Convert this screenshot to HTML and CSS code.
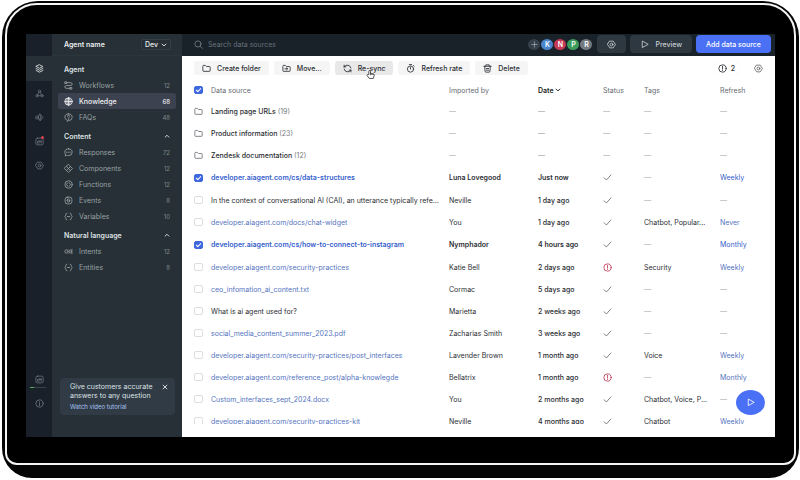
FILE: index.html
```html
<!doctype html>
<html lang="en">
<head>
    <meta charset="utf-8">
    <title>Knowledge</title>
    <link rel="stylesheet" href="styles.css">
</head>
<body>
<svg class="sprite" aria-hidden="true">
    <symbol id="layers" viewBox="0 0 16 16"><path d="M8 1.500l6 3-6 3-6-3zM2 8l6 3 6-3M2 11.500l6 3 6-3"/></symbol>
    <symbol id="nodes" viewBox="0 0 16 16"><circle cx="8" cy="4" r="2"/><circle cx="3.500" cy="12" r="2"/><circle cx="12.500" cy="12" r="2"/><path d="M7 6l-2.500 4M9 6l2.500 4M5.500 12h5"/></symbol>
    <symbol id="launch" viewBox="0 0 16 16"><path d="M9 2l5 6-5 6-3-6zM6 5v6M3.500 5v6M1.500 6.500v3M10 5v6"/></symbol>
    <symbol id="chart" viewBox="0 0 16 16"><rect x="1.500" y="2" width="13" height="12" rx="3"/><path d="M4.500 11V8M7 11V6l2 3 2-3v5"/></symbol>
    <symbol id="gear" viewBox="0 0 16 16"><path d="M5 2h6l4 6-4 6H5L1 8z"/><circle cx="8" cy="8" r="2.500"/></symbol>
    <symbol id="info" viewBox="0 0 16 16"><circle cx="8" cy="8" r="6.500"/><path d="M8 7.500V12M8 4.500v1"/></symbol>
    <symbol id="alert" viewBox="0 0 16 16"><circle cx="8" cy="8" r="6.500"/><path d="M8 4v4.500M8 10.500v1"/></symbol>
    <symbol id="flow" viewBox="0 0 16 16"><path d="M5 3h7a2 2 0 010 5H4a2 2 0 000 5h7"/><path d="M2 1.500h3v3H2zM11 11.500h3v3h-3z"/></symbol>
    <symbol id="globe" viewBox="0 0 16 16"><circle cx="8" cy="8" r="6.500"/><ellipse cx="8" cy="8" rx="3" ry="6.500"/><path d="M1.500 8h13M8 1.500v13"/></symbol>
    <symbol id="question" viewBox="0 0 16 16"><path d="M8 1.500a6.500 6 0 016.500 6 6.500 6 0 01-6.500 6l-2 1.500v-2A6.500 6 0 011.500 7.500 6.500 6 0 018 1.500z"/><path d="M6 6a2 2 0 114 0c0 1.500-2 1.500-2 3M8 10.500v1"/></symbol>
    <symbol id="bubble" viewBox="0 0 16 16"><path d="M8 1.500a6.500 6 0 016.500 6 6.500 6 0 01-6.500 6c-1 0-2 0-3-.7L2 14l.7-3A6 6 0 011.500 7.500 6.500 6 0 018 1.500z"/><path d="M4.500 7.500h1M7.500 7.500h1M10.500 7.500h1"/></symbol>
    <symbol id="component" viewBox="0 0 16 16"><path d="M8 1l7 7-7 7-7-7zM4.500 4.500l7 7M11.500 4.500l-7 7"/></symbol>
    <symbol id="function" viewBox="0 0 16 16"><circle cx="8" cy="8" r="6.500"/><path d="M6.500 5L4.500 8l2 3M9.500 5l2 3-2 3"/></symbol>
    <symbol id="event" viewBox="0 0 16 16"><rect x="2" y="2" width="12" height="12" rx="4"/><path d="M7 5L5 8h2v3M9 5v3h2l-2 3"/></symbol>
    <symbol id="braces" viewBox="0 0 16 16"><path d="M5 2C2 2 4 7 1.500 8 4 9 2 14 5 14M11 2c3 0 1 5 3.500 6-2.500 1-.500 6-3.500 6M6 8h4"/></symbol>
    <symbol id="intent" viewBox="0 0 16 16"><circle cx="4.500" cy="8" r="3"/><path d="M9 5c2 2 2 4 0 6M11.500 5c2 2 2 4 0 6M14 4v8"/></symbol>
    <symbol id="folder" viewBox="0 0 16 16"><path d="M1.500 3.500a1 1 0 011-1h3.500l2 2h5.500a1 1 0 011 1V12a1 1 0 01-1 1h-11a1 1 0 01-1-1z"/></symbol>
    <symbol id="move" viewBox="0 0 16 16"><path d="M1.500 3.500a1 1 0 011-1h3.500l2 2h5.500a1 1 0 011 1V12a1 1 0 01-1 1h-11a1 1 0 01-1-1zM5 8.500h5M8 6.500l2 2-2 2"/></symbol>
    <symbol id="sync" viewBox="0 0 16 16"><path d="M2 5V2M2 5h3M2 5a6.500 6 0 0112 2M14 11v3M14 11h-3M14 11A6.500 6 0 012 9"/></symbol>
    <symbol id="timer" viewBox="0 0 16 16"><circle cx="8" cy="9" r="5.500"/><path d="M8 5.500V9M6 1h4M13 2.500l1.500 1.500"/></symbol>
    <symbol id="trash" viewBox="0 0 16 16"><path d="M1.500 4h13M5 4V1.500h6V4M3 4l.7 9a1.500 1.500 0 001.500 1.500h5.600a1.500 1.500 0 001.500-1.500L13 4M6 8h4M6 11h4"/></symbol>
    <symbol id="search" viewBox="0 0 16 16"><circle cx="7" cy="7" r="5.500"/><path d="M11 11l4 4"/></symbol>
    <symbol id="play" viewBox="0 0 16 16"><path d="M4 2.500v11L14 8z"/></symbol>
    <symbol id="up" viewBox="0 0 16 16"><path d="M3 11l5-5 5 5"/></symbol>
    <symbol id="down" viewBox="0 0 16 16"><path d="M3 5.500l5 5 5-5"/></symbol>
    <symbol id="plus" viewBox="0 0 16 16"><path d="M8 2v12M2 8h12"/></symbol>
    <symbol id="close" viewBox="0 0 16 16"><path d="M3 3l10 10M13 3L3 13"/></symbol>
    <symbol id="check" viewBox="0 0 16 16"><path d="M2 8.500l4 4 8-9"/></symbol>
</svg>
<div class="device">
    <div class="bezel">
        <div class="app">
            <nav class="rail" aria-label="Main">
                <button class="rail-btn active" aria-label="Content"><svg class="icon"><use href="#layers"/></svg></button>
                <button class="rail-btn" aria-label="Flows"><svg class="icon"><use href="#nodes"/></svg></button>
                <button class="rail-btn" aria-label="Launch"><svg class="icon"><use href="#launch"/></svg></button>
                <button class="rail-btn notify" aria-label="Analytics"><svg class="icon"><use href="#chart"/></svg></button>
                <button class="rail-btn" aria-label="Settings"><svg class="icon"><use href="#gear"/></svg></button>
                <button class="rail-btn usage" aria-label="Usage"><svg class="icon"><use href="#chart"/></svg></button>
                <button class="rail-btn" aria-label="Help"><svg class="icon"><use href="#info"/></svg></button>
            </nav>

            <aside class="sidebar">
                <header class="agent">
                    <strong>Agent name</strong>
                    <button class="env">Dev <svg class="icon tiny"><use href="#down"/></svg></button>
                </header>
                <div class="menu">
                    <section>
                        <h2>Agent</h2>
                        <a href="#"><svg class="icon"><use href="#flow"/></svg>Workflows<span>12</span></a>
                        <a href="#" class="current"><svg class="icon"><use href="#globe"/></svg>Knowledge<span>68</span></a>
                        <a href="#"><svg class="icon"><use href="#question"/></svg>FAQs<span>48</span></a>
                    </section>
                    <section>
                        <h2>Content <svg class="icon tiny"><use href="#up"/></svg></h2>
                        <a href="#"><svg class="icon"><use href="#bubble"/></svg>Responses<span>72</span></a>
                        <a href="#"><svg class="icon"><use href="#component"/></svg>Components<span>12</span></a>
                        <a href="#"><svg class="icon"><use href="#function"/></svg>Functions<span>12</span></a>
                        <a href="#"><svg class="icon"><use href="#event"/></svg>Events<span>8</span></a>
                        <a href="#"><svg class="icon"><use href="#braces"/></svg>Variables<span>10</span></a>
                    </section>
                    <section>
                        <h2>Natural language <svg class="icon tiny"><use href="#up"/></svg></h2>
                        <a href="#"><svg class="icon"><use href="#intent"/></svg>Intents<span>12</span></a>
                        <a href="#"><svg class="icon"><use href="#braces"/></svg>Entities<span>8</span></a>
                    </section>
                </div>
                <div class="promo">
                    <div>
                        <p>Give customers accurate<br>answers to any question</p>
                        <a href="#">Watch video tutorial</a>
                    </div>
                    <button aria-label="Dismiss"><svg class="icon tiny"><use href="#close"/></svg></button>
                </div>
            </aside>

            <main>
                <header class="topbar">
                    <label class="search">
                        <svg class="icon"><use href="#search"/></svg>
                        <input type="search" placeholder="Search data sources" aria-label="Search data sources">
                    </label>
                    <div class="people">
                        <button class="avatar add" aria-label="Invite"><svg class="icon"><use href="#plus"/></svg></button>
                        <span class="avatar blue">K</span>
                        <span class="avatar red">N</span>
                        <span class="avatar green">P</span>
                        <span class="avatar gray">R</span>
                    </div>
                    <button class="dark-btn square" aria-label="Settings"><svg class="icon"><use href="#gear"/></svg></button>
                    <button class="dark-btn preview"><svg class="icon"><use href="#play"/></svg>Preview</button>
                    <button class="primary-btn">Add data source</button>
                </header>

                <div class="toolbar">
                    <button class="tool"><svg class="icon"><use href="#folder"/></svg>Create folder</button>
                    <button class="tool"><svg class="icon"><use href="#move"/></svg>Move...</button>
                    <button class="tool hover"><svg class="icon"><use href="#sync"/></svg>Re-sync
                        <svg class="pointer" viewBox="0 0 16 16"><path d="M5 8V2.500a1.500 1.500 0 013 0V6l5 1c1.500.5 2 1.500 1.500 3L13 15H6L2 10c-1-1.500 1-2.500 3-2z"/><path d="M8 6v3M10.500 6.500V9M13 7v2"/></svg>
                    </button>
                    <button class="tool"><svg class="icon"><use href="#timer"/></svg>Refresh rate</button>
                    <button class="tool"><svg class="icon"><use href="#trash"/></svg>Delete</button>
                    <button class="issues"><svg class="icon"><use href="#alert"/></svg>2</button>
                    <button class="plain" aria-label="Table settings"><svg class="icon"><use href="#gear"/></svg></button>
                </div>

                <div class="sources">
                    <table>
                        <colgroup>
                            <col class="col-check"><col><col class="col-by"><col class="col-date"><col class="col-status"><col class="col-tags"><col class="col-refresh">
                        </colgroup>
                        <thead>
                            <tr>
                                <th><input type="checkbox" aria-label="Select all" checked></th>
                                <th>Data source</th>
                                <th>Imported by</th>
                                <th class="sorted">Date <svg class="icon tiny"><use href="#down"/></svg></th>
                                <th>Status</th>
                                <th>Tags</th>
                                <th>Refresh</th>
                            </tr>
                        </thead>
                        <tbody>
                            <tr class="folder"><td><svg class="icon"><use href="#folder"/></svg></td><td>Landing page URLs <span>(19)</span></td><td>—</td><td>—</td><td>—</td><td>—</td><td>—</td></tr>
                            <tr class="folder"><td><svg class="icon"><use href="#folder"/></svg></td><td>Product information <span>(23)</span></td><td>—</td><td>—</td><td>—</td><td>—</td><td>—</td></tr>
                            <tr class="folder"><td><svg class="icon"><use href="#folder"/></svg></td><td>Zendesk documentation <span>(12)</span></td><td>—</td><td>—</td><td>—</td><td>—</td><td>—</td></tr>
                            <tr class="selected"><td><input type="checkbox" aria-label="Select row" checked></td><td><a href="#">developer.aiagent.com/cs/data-structures</a></td><td>Luna Lovegood</td><td>Just now</td><td><svg class="icon ok"><use href="#check"/></svg></td><td class="none">—</td><td><a href="#">Weekly</a></td></tr>
                            <tr><td><input type="checkbox" aria-label="Select row"></td><td>In the context of conversational AI (CAI), an utterance typically refers to</td><td>Neville</td><td>1 day ago</td><td><svg class="icon ok"><use href="#check"/></svg></td><td class="none">—</td><td class="none">—</td></tr>
                            <tr><td><input type="checkbox" aria-label="Select row"></td><td><a href="#">developer.aiagent.com/docs/chat-widget</a></td><td>You</td><td>1 day ago</td><td><svg class="icon ok"><use href="#check"/></svg></td><td>Chatbot, Popular...</td><td><a href="#">Never</a></td></tr>
                            <tr class="selected"><td><input type="checkbox" aria-label="Select row" checked></td><td><a href="#">developer.aiagent.com/cs/how-to-connect-to-instagram</a></td><td>Nymphador</td><td>4 hours ago</td><td><svg class="icon ok"><use href="#check"/></svg></td><td class="none">—</td><td><a href="#">Monthly</a></td></tr>
                            <tr><td><input type="checkbox" aria-label="Select row"></td><td><a href="#">developer.aiagent.com/security-practices</a></td><td>Katie Bell</td><td>2 days ago</td><td><svg class="icon error"><use href="#alert"/></svg></td><td>Security</td><td><a href="#">Weekly</a></td></tr>
                            <tr><td><input type="checkbox" aria-label="Select row"></td><td><a href="#">ceo_infomation_ai_content.txt</a></td><td>Cormac</td><td>5 days ago</td><td><svg class="icon ok"><use href="#check"/></svg></td><td class="none">—</td><td class="none">—</td></tr>
                            <tr><td><input type="checkbox" aria-label="Select row"></td><td>What is ai agent used for?</td><td>Marietta</td><td>2 weeks ago</td><td><svg class="icon ok"><use href="#check"/></svg></td><td class="none">—</td><td class="none">—</td></tr>
                            <tr><td><input type="checkbox" aria-label="Select row"></td><td><a href="#">social_media_content_summer_2023.pdf</a></td><td>Zacharias Smith</td><td>3 weeks ago</td><td><svg class="icon ok"><use href="#check"/></svg></td><td class="none">—</td><td class="none">—</td></tr>
                            <tr><td><input type="checkbox" aria-label="Select row"></td><td><a href="#">developer.aiagent.com/security-practices/post_interfaces</a></td><td>Lavender Brown</td><td>1 month ago</td><td><svg class="icon ok"><use href="#check"/></svg></td><td>Voice</td><td><a href="#">Weekly</a></td></tr>
                            <tr><td><input type="checkbox" aria-label="Select row"></td><td><a href="#">developer.aiagent.com/reference_post/alpha-knowlegde</a></td><td>Bellatrix</td><td>1 month ago</td><td><svg class="icon error"><use href="#alert"/></svg></td><td class="none">—</td><td><a href="#">Monthly</a></td></tr>
                            <tr><td><input type="checkbox" aria-label="Select row"></td><td><a href="#">Custom_interfaces_sept_2024.docx</a></td><td>You</td><td>2 months ago</td><td><svg class="icon ok"><use href="#check"/></svg></td><td>Chatbot, Voice, P...</td><td class="none">—</td></tr>
                            <tr><td><input type="checkbox" aria-label="Select row"></td><td><a href="#">developer.aiagent.com/security-practices-kit</a></td><td>Neville</td><td>4 months ago</td><td><svg class="icon ok"><use href="#check"/></svg></td><td>Chatbot</td><td><a href="#">Weekly</a></td></tr>
                        </tbody>
                    </table>
                </div>
                <button class="run" aria-label="Run agent"><svg class="icon"><use href="#play"/></svg></button>
            </main>
        </div>
    </div>
</div>
</body>
</html>
```
FILE: styles.css
```css
* {
    box-sizing: border-box;
}
body {
    margin: 0;
    height: 100vh;
    padding: 1px 1px 2px 2px;
    background: #fff;
    font-family: Inter, "Liberation Sans", sans-serif;
    font-size: 7px;
    line-height: 9px;
    color: #2b2e33;
}
button, input {
    font: inherit;
    color: inherit;
    margin: 0;
}
button {
    border: 0;
    padding: 0;
    background: none;
    display: flex;
    align-items: center;
    justify-content: center;
    white-space: nowrap;
}
a {
    color: #5575c0;
    text-decoration: none;
}
.sprite {
    display: none;
}
.icon {
    width: 9px;
    height: 9px;
    flex: none;
    fill: none;
    stroke: currentColor;
    stroke-width: 1.5;
    stroke-linecap: round;
    stroke-linejoin: round;
}
.icon.tiny {
    width: 6px;
    height: 6px;
    stroke-width: 2.5;
}

/* tablet */
.device {
    height: 100%;
    padding: 2px 3px 13px;
    background: #050505;
    border-radius: 36px 36px 30px 30px;
}
.bezel {
    height: 100%;
    padding: 29px 19px 26px 19px;
    background: #000;
    border: 2px solid #f4f4f4;
    border-radius: 32px 32px 12px 12px;
}
.app {
    display: flex;
    height: 100%;
    background: #fff;
    overflow: hidden;
}

/* left rail */
.rail {
    width: 26px;
    flex: none;
    display: flex;
    flex-direction: column;
    padding: 22px 0;
    background: #19202a;
    color: #68717a;
}
.rail-btn {
    position: relative;
    height: 24px;
    flex: none;
}
.rail-btn.active {
    height: 25px;
    background: #263036;
    color: #e4e7e9;
}
.notify::after {
    content: "";
    position: absolute;
    top: 7px;
    right: 8px;
    width: 3px;
    height: 3px;
    border-radius: 50%;
    background: #d8434f;
}
.usage {
    margin-top: auto;
}
.usage::after {
    content: "";
    position: absolute;
    left: 4px;
    right: 6px;
    bottom: 3px;
    height: 1px;
    background: linear-gradient(90deg, #4caf50 25%, #38434a 25%);
}

/* sidebar */
.sidebar {
    width: 130px;
    flex: none;
    display: flex;
    flex-direction: column;
    background: #263036;
    color: #9aa1a5;
}
.agent {
    height: 22px;
    flex: none;
    display: flex;
    align-items: center;
    justify-content: space-between;
    padding: 0 11px 0 12px;
    border-bottom: 1px solid #2b363c;
    color: #eceeef;
}
.agent strong {
    font-weight: 600;
}
.env {
    height: 11px;
    padding: 0 3px;
    gap: 3px;
    border: 1px solid #344047;
    border-radius: 2px;
    font-weight: 500;
}
.menu {
    display: flex;
    flex-direction: column;
    gap: 3px;
    padding: 5px 6px;
}
.menu h2 {
    display: flex;
    align-items: center;
    justify-content: space-between;
    height: 16px;
    margin: 0;
    padding: 0 6px;
    font-size: 7px;
    font-weight: 600;
    color: #dfe2e3;
}
.menu a {
    display: flex;
    align-items: center;
    gap: 6px;
    height: 16px;
    padding: 0 6px;
    border-radius: 2px;
    color: #9aa1a5;
}
.menu a span {
    margin-left: auto;
    font-size: 6px;
    color: #808a90;
}
.menu a.current,
.menu a.current span {
    color: #eff0f2;
    font-weight: 500;
}
.menu a.current {
    background: #3c4250;
}
.promo {
    display: flex;
    justify-content: space-between;
    align-items: flex-start;
    margin: auto 7px 22px 8px;
    padding: 4px 7px 4px 10px;
    border-radius: 4px;
    background: #303b46;
    color: #dde1e4;
}
.promo p {
    margin: 0 0 2px;
}
.promo a {
    font-size: 6px;
    color: #a9c4f5;
}
.promo button {
    height: 9px;
}

/* main area */
main {
    position: relative;
    flex: 1;
    min-width: 0;
    display: flex;
    flex-direction: column;
    padding-bottom: 13px;
}
.topbar {
    height: 22px;
    flex: none;
    display: flex;
    align-items: center;
    gap: 4px;
    padding: 0 4px 2px 12px;
    background: #192129;
    color: #c9ced2;
}
.search {
    flex: 1;
    display: flex;
    align-items: center;
    gap: 5px;
    color: #747d84;
}
.search input {
    flex: 1;
    min-width: 0;
    padding: 0;
    border: 0;
    background: none;
    outline: 0;
}
.search input::placeholder {
    color: #68717a;
}
.people {
    display: flex;
}
.avatar {
    width: 14px;
    height: 13px;
    margin-left: -1px;
    border: 1px solid #192129;
    border-radius: 50%;
    color: #fff;
    font-weight: 600;
    line-height: 11px;
    text-align: center;
}
.add { background: #35404a; }
.blue { background: #4a86cc; }
.red { background: #c43a55; }
.green { background: #3c9c5c; }
.gray { background: #747a80; }
.dark-btn,
.primary-btn {
    height: 18px;
    border-radius: 4px;
    font-weight: 500;
}
.dark-btn {
    padding: 0 10px;
    gap: 6px;
    background: #2d3840;
}
.primary-btn {
    padding: 0 10px;
    background: #4a70f6;
    color: #fff;
}
.add .icon {
    width: 7px;
    height: 7px;
    color: #aab2b8;
}
.toolbar {
    display: flex;
    align-items: center;
    gap: 5px;
    padding: 5px 12px 5px 12px;
    font-weight: 500;
}
.tool {
    position: relative;
    height: 14px;
    padding: 0 8px;
    gap: 6px;
    border-radius: 3px;
    background: #f5f5f5;
}
.tool.hover {
    background: #e8e8e8;
}
.pointer {
    position: absolute;
    top: 9px;
    left: 31px;
    width: 9px;
    height: 9px;
    fill: #fff;
    stroke: #333;
    stroke-width: 1.5;
}
.issues {
    height: 12px;
    margin-left: auto;
    padding: 0 4px;
    gap: 4px;
    border-radius: 2px;
    box-shadow: 0 0 1px #ddd;
}
.plain {
    margin-left: 10px;
    color: #666;
}

/* data sources */
.sources {
    flex: 1;
    min-height: 0;
    overflow: hidden;
}
table {
    width: 100%;
    table-layout: fixed;
    border-collapse: collapse;
}
.col-check { width: 29px; }
.col-by { width: 89px; }
.col-date { width: 65px; }
.col-status { width: 41px; }
.col-tags { width: 76px; }
.col-refresh { width: 55px; }
th, td {
    height: 22px;
    padding: 0;
    text-align: left;
    font-weight: 400;
    white-space: nowrap;
    overflow: hidden;
    text-overflow: ellipsis;
}
th {
    height: 20px;
    color: #666a70;
}
.sorted {
    color: #1d1f23;
    font-weight: 600;
}
td:nth-child(2) {
    padding-right: 10px;
}
td:nth-child(4) {
    font-weight: 500;
}
th:first-child,
td:first-child {
    padding-left: 12px;
}
td .icon,
td input,
th input {
    display: block;
}
.folder td {
    color: #a5a8ab;
}
.folder td:first-child {
    color: #6c7075;
}
.folder td:nth-child(2) {
    color: #2b2e33;
    font-weight: 500;
}
.folder span {
    color: #777b80;
    font-weight: 400;
}
.selected td {
    height: 23px;
    font-weight: 600;
}
.selected td:last-child {
    font-weight: 400;
}
.selected a {
    color: #3560cc;
}
td.none {
    color: #a5a8ab;
    font-weight: 400;
}
.ok {
    color: #66706a;
}
.error {
    color: #c23b58;
}
input[type="checkbox"] {
    appearance: none;
    width: 9px;
    height: 8px;
    border: 1px solid #dcdee0;
    border-radius: 2px;
    background: #fff;
}
input[type="checkbox"]:checked {
    border-color: #4068dd;
    background: #4068dd;
}
input[type="checkbox"]:checked::after {
    content: "";
    display: block;
    width: 4px;
    height: 2px;
    margin: 1px auto;
    border: solid #fff;
    border-width: 0 0 1px 1px;
    transform: rotate(-45deg);
}
.run {
    position: absolute;
    right: 10px;
    bottom: 22px;
    width: 29px;
    height: 25px;
    border-radius: 50%;
    background: #4a70f6;
    color: #fff;
}
```
